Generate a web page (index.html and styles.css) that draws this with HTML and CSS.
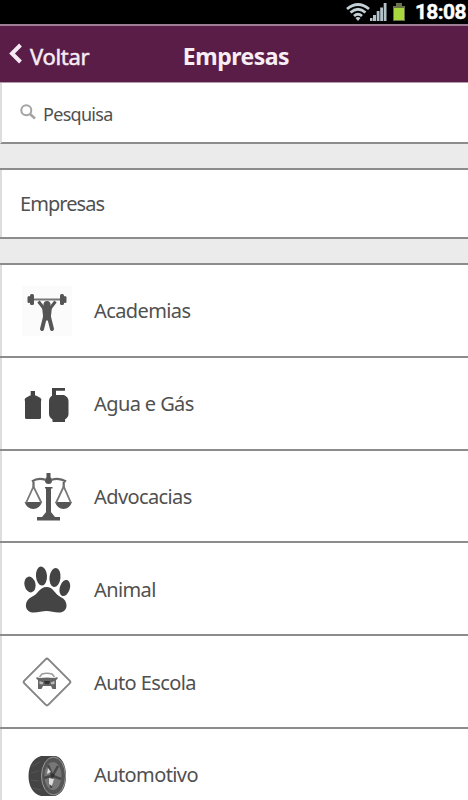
FILE: index.html
```html
<!DOCTYPE html>
<html lang="pt-BR">
<head>
    <meta charset="UTF-8">
    <meta name="viewport" content="width=device-width, initial-scale=1.0">
    <title>Empresas</title>
    <link rel="stylesheet" href="styles.css">
</head>
<body>
    <div class="status-bar">
        <svg class="wifi" width="24" height="19" viewBox="0 0 24 19" fill="none" stroke="#c3d0d6" stroke-width="2.800">
            <path d="M1 6Q12-3 23 6M4.500 9.500Q12 3 19.500 9.500M8 13Q12 9.500 16 13"/>
            <path d="M9.500 15L12 18L14.500 15Q12 13 9.500 15Z" fill="#c3d0d6" stroke="none"/>
        </svg>
        <svg class="signal" width="18" height="18" viewBox="0 0 18 18" fill="#b5c4cb">
            <path d="M1 15h2.500v3H1zM4 12h3v6H4zM7.700 8h2.800v10H7.700zM11.200 4.500H14V18h-2.800zM14.700 0h2.800v18h-2.800z"/>
        </svg>
        <svg class="battery" width="14" height="19" viewBox="0 0 14 19">
            <path d="M4 0h6v3h3v15H1V3h3z" fill="#68734a"/>
            <path d="M2 5h10v12H2z" fill="#a9d83e"/>
        </svg>
        <span class="clock">18:08</span>
    </div>
    <header class="header">
        <a class="back">
            <svg width="14" height="22" viewBox="0 0 14 22" fill="none" stroke="#f4e8f2" stroke-width="4">
                <path d="M12.500 2L4 10.500L12.500 19"/>
            </svg>
            <span>Voltar</span>
        </a>
        <h1>Empresas</h1>
    </header>
    <div class="search">
        <svg width="17" height="17" viewBox="0 0 17 17" fill="none" stroke="#a3a3a3" stroke-width="2">
            <circle cx="6.300" cy="6.300" r="5"/>
            <path d="M10 10L15 14.500" stroke-width="2.500"/>
        </svg>
        <span>Pesquisa</span>
    </div>
    <div class="section">Empresas</div>
    <ul class="list">
        <li>
            <svg class="icon" viewBox="0 0 50 50">
                <path d="M0 0h50v50H0z" fill="#fbfbfb"/>
                <path d="M9 13.500h33" stroke="#777" stroke-width="2"/>
                <g fill="#555">
                    <rect x="8" y="8" width="4" height="11" rx="1.500"/>
                    <rect x="5.500" y="10" width="3" height="7" rx="1.500"/>
                    <rect x="38" y="8" width="4" height="11" rx="1.500"/>
                    <rect x="41.500" y="10" width="3" height="7" rx="1.500"/>
                    <circle cx="25" cy="18.500" r="3.500"/>
                    <path d="M20 20.500h10l-1.500 14h-7z"/>
                </g>
                <path d="M16.500 15.500L22 22.500M33.500 15.500L28 22.500" stroke="#555" stroke-width="3"/>
                <path d="M23 31L20 43M27 31L30 43" stroke="#555" stroke-width="4" stroke-linecap="round"/>
            </svg>
            <span>Academias</span>
        </li>
        <li>
            <svg class="icon" viewBox="0 0 50 50" fill="#444">
                <rect x="8.700" y="12" width="4.300" height="6"/>
                <path d="M8 16.500h6L18.500 19Q20 20 19 22.500V38.500A1.500 1.500 0 0 1 17.500 40H4.500A1.500 1.500 0 0 1 3 38.500V22.500Q2 20 3.500 19z"/>
                <path d="M30 9H43V11.800H34V17h-4z"/>
                <path d="M31 16H42Q46.500 18 46.500 22V35Q46.500 38 43 40.500V43H30.500V40.500Q27 38 27 35V22Q27 18 31 16Z"/>
            </svg>
            <span>Agua e Gás</span>
        </li>
        <li>
            <svg class="icon" viewBox="0 0 50 50">
                <g fill="#555">
                    <rect x="24.500" y="2" width="4" height="7"/>
                    <circle cx="26.500" cy="9.500" r="3.500"/>
                    <path d="M23 16h7.500v1.500H29V41h-5V17.500H23z"/>
                    <path d="M15 46h23v3.500H15zM20 46l4.500-5.500h4L33 46z"/>
                    <path d="M2.500 31H20q-2.500 7-8.700 7T2.500 31zM33 31h17q-2.500 7-8.500 7T33 31z"/>
                </g>
                <path d="M10 10.500Q16 6 24 9M29 9Q37 6 44 10.500M11.500 11v5M41.700 11v5" fill="none" stroke="#666" stroke-width="2.200"/>
                <path d="M4 32L11.500 15.500L19.500 32M34 32L41.700 15.500L49 32" fill="none" stroke="#777" stroke-width="1.800"/>
            </svg>
            <span>Advocacias</span>
        </li>
        <li>
            <svg class="icon" viewBox="0 0 50 50" fill="#444">
                <ellipse cx="8" cy="20.500" rx="5.500" ry="8" transform="rotate(-12 8 20.500)"/>
                <ellipse cx="19.500" cy="12" rx="5.500" ry="9.500" transform="rotate(-4 19.500 12)"/>
                <ellipse cx="33" cy="13.500" rx="5.500" ry="9.500" transform="rotate(7 33 13.500)"/>
                <ellipse cx="42.800" cy="24" rx="5" ry="8.300" transform="rotate(17 42.800 24)"/>
                <path d="M24.500 23C31.500 23 32 29.500 38.500 33C44.500 35.500 46 42 43 46C38.500 51 30.500 47 24.500 47C18.500 47 9.500 51 5.500 46C2 41 4.500 35.500 9.500 33C16 30.500 17.500 23 24.500 23Z"/>
            </svg>
            <span>Animal</span>
        </li>
        <li>
            <svg class="icon" viewBox="0 0 50 50">
                <rect x="8" y="8" width="34" height="34" rx="2" transform="rotate(45 25 25)" fill="#fff" stroke="#858585" stroke-width="2"/>
                <path d="M17.500 20L20 17Q25 15.500 30 17L32.500 20" fill="none" stroke="#999" stroke-width="1.500"/>
                <path d="M14.500 20l3 1q7.500-1 15 0l3-1v2L34 23V32H30.500L29 29h-8l-1.500 3H16v-9L14.500 22z" fill="#666"/>
                <path d="M17.500 24l4 1.500-1 2-3-.5zM32.500 24l-4 1.500 1 2 3-.5z" fill="#bbb"/>
                <path d="M22 24h6l-1 3h-4z" fill="#333"/>
            </svg>
            <span>Auto Escola</span>
        </li>
        <li>
            <svg class="icon" viewBox="0 0 50 50">
                <path d="M19 6H33C40 7 44 15 44 26S40 44 33 46H19C11 44 6.500 36 6.500 26S11 8 19 6Z" fill="#444"/>
                <ellipse cx="31.500" cy="26" rx="12" ry="19" fill="#555" stroke="#999" stroke-width="1"/>
                <ellipse cx="31" cy="26" rx="8.500" ry="14" fill="#777"/>
                <path d="M30 25L26 15M31 25L36 16M31 26L39 29M30 26L29 38M29 26L22 28" stroke="#484848" stroke-width="2.500"/>
                <path d="M26 18l3 4-4 2zM27 28l5 1-2 7-3-2z" fill="#ddd"/>
                <path d="M10 16l8-4M9 23l8-2M9 30l8 1M11 38l8 2" stroke="#555" stroke-width="1"/>
                <circle cx="30.500" cy="25.500" r="2" fill="#333"/>
            </svg>
            <span>Automotivo</span>
        </li>
    </ul>
</body>
</html>
```
FILE: styles.css
```css
* {
    box-sizing: border-box;
}
body {
    margin: 0;
    height: 800px;
    overflow: hidden;
    background-color: #ebebeb;
    font-family: "Noto Sans", "Open Sans", sans-serif;
    color: #505050;
}
.status-bar {
    display: flex;
    align-items: center;
    justify-content: flex-end;
    height: 24px;
    padding-right: 2px;
    background-color: #000;
}
.wifi {
    margin-right: -1px;
}
.signal {
    margin-right: 5px;
}
.battery {
    margin-right: 9px;
}
.clock {
    font-family: Roboto, sans-serif;
    font-size: 21px;
    font-weight: 700;
    line-height: 24px;
    letter-spacing: -0.6px;
    color: #fff;
    -webkit-text-stroke: 0.4px #fff;
}
.header {
    display: grid;
    grid-template-columns: 1fr auto 1fr;
    align-items: center;
    height: 59px;
    padding: 4px 4px 0 8px;
    border-top: 2px solid #9d7e94;
    border-bottom: 1px solid #b59aad;
    background-color: #5a1d47;
    color: #f7edf5;
}
.back {
    display: flex;
    align-items: center;
    gap: 8px;
    font-size: 22px;
    letter-spacing: -0.3px;
    -webkit-text-stroke: 0.5px #f4e8f2;
}
.back svg {
    margin-top: -4px;
}
h1 {
    margin: 0;
    font-size: 23px;
    font-weight: 700;
    letter-spacing: -0.5px;
}
.search {
    display: flex;
    align-items: center;
    gap: 6px;
    height: 61px;
    padding: 3px 0 0 18px;
    border-left: 2px solid #ddd;
    border-bottom: 2px solid #8c8c8c;
    background-color: #fff;
    font-size: 18px;
    letter-spacing: -0.7px;
}
.search svg {
    margin-top: -3px;
}
.section {
    display: flex;
    align-items: center;
    height: 71px;
    margin: 24px 0;
    padding-left: 20px;
    border: solid #8c8c8c;
    border-width: 2px 0;
    box-shadow: inset 2px 0 #ddd;
    background-color: #fff;
    font-size: 20px;
    letter-spacing: -0.95px;
}
.list {
    margin: 0;
    padding: 0;
    list-style: none;
    border-top: 2px solid #8c8c8c;
}
.list li {
    display: flex;
    align-items: center;
    gap: 22px;
    height: 92.8px;
    padding: 1px 0 0 22px;
    border-bottom: 2px solid #8c8c8c;
    box-shadow: inset 2px 0 #ddd;
    background-color: #fff;
    font-size: 20px;
    letter-spacing: -0.6px;
}
.icon {
    width: 50px;
    height: 50px;
}
```
